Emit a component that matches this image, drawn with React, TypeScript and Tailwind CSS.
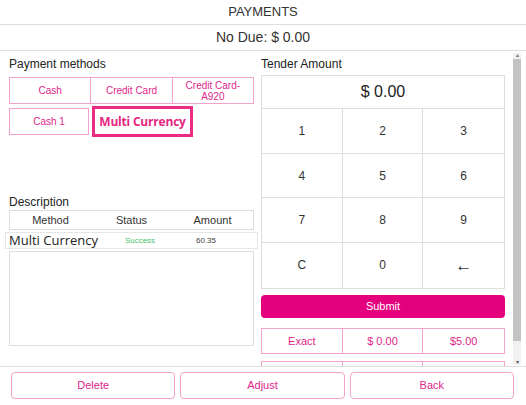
import React from "react";

const methodsRow1 = ["Cash", "Credit Card", "Credit Card-A920"];
const keys = ["1", "2", "3", "4", "5", "6", "7", "8", "9", "C", "0", "←"];
const quick = ["Exact", "$ 0.00", "$5.00"];

const App = () => {
  return (
    <div className="w-[526px] h-[405px] bg-white overflow-hidden flex flex-col text-[#333] font-['Liberation_Sans',Arial,sans-serif]">
      <div className="h-[25px] flex items-center justify-center text-[13px] border-b border-[#dedede]">
        PAYMENTS
      </div>
      <div className="h-[26px] flex items-center justify-center text-[14px] border-b border-[#dedede]">
        No Due: $ 0.00
      </div>

      <div className="h-[316px] flex border-b border-[#dedede]">
        <div className="flex-1 flex gap-[7px] pl-[9px] overflow-hidden">
          {/* left column */}
          <div className="w-[245px] flex flex-col">
            <div className="mt-[5px] text-[12px] leading-[16px] text-[#222]">Payment methods</div>
            <div className="mt-[5px] flex">
              {methodsRow1.map((m, i) => (
                <div
                  key={m}
                  className={`h-[27px] flex-1 flex items-center justify-center text-center text-[10px] leading-[11px] text-[#e0268a] border border-[#f3a3cb] ${i > 0 ? "border-l-0" : ""}`}
                >
                  {m === "Credit Card-A920" ? (
                    <span>
                      Credit Card-
                      <br />
                      A920
                    </span>
                  ) : (
                    m
                  )}
                </div>
              ))}
            </div>
            <div className="mt-[2px] flex items-center gap-[3px]">
              <div className="w-[80px] h-[27px] flex items-center justify-center text-[10px] text-[#e0268a] border border-[#f3a3cb]">
                Cash 1
              </div>
              <div className="w-[101px] h-[31px] flex items-center justify-center border-[3px] border-[#ea2c83] text-[12px] font-bold whitespace-nowrap tracking-[-0.2px] text-[#e4267f] font-['Open_Sans',sans-serif]">
                Multi Currency
              </div>
            </div>

            <div className="mt-[57px] text-[12px] leading-[16px] text-[#222]">Description</div>
            <div className="h-[20px] grid grid-cols-3 border border-[#dedede] text-[11px] text-[#333]">
              <div className="flex items-center justify-center">Method</div>
              <div className="flex items-center justify-center">Status</div>
              <div className="flex items-center justify-center">Amount</div>
            </div>
            <div className="mt-[2px] -mx-[4px] h-[17px] flex items-center border border-[#e6e6e6]">
              <div className="w-[108px] pl-[3px] text-[13px] text-[#222] font-['Open_Sans',sans-serif] leading-none whitespace-nowrap">
                Multi Currency
              </div>
              <div className="w-[52px] text-center text-[8px] text-[#3fbf6b]">Success</div>
              <div className="flex-1 pl-[30px] text-[8px] text-[#444]">60.35</div>
            </div>
            <div className="mt-[2px] h-[95px] border border-[#dedede]"></div>
          </div>

          {/* right column */}
          <div className="w-[244px] flex flex-col">
            <div className="mt-[5px] text-[12px] leading-[16px] text-[#222]">Tender Amount</div>
            <div className="mt-[3px] border border-[#dedede]">
              <div className="h-[33px] flex items-center justify-center text-[16px] text-[#222] border-b border-[#dedede]">
                $ 0.00
              </div>
              <div className="grid grid-cols-3">
                {keys.map((k, i) => (
                  <div
                    key={k}
                    className={`h-[44.7px] flex items-center justify-center text-[#333] border-[#dedede] ${k === "←" ? "text-[17px]" : "text-[12px]"} ${i % 3 !== 2 ? "border-r" : ""} ${i < 9 ? "border-b" : ""}`}
                  >
                    {k}
                  </div>
                ))}
              </div>
            </div>
            <div className="mt-[6px] h-[23px] shrink-0 rounded-[4px] bg-[#e5007e] flex items-center justify-center text-[11px] text-white">
              Submit
            </div>
            <div className="mt-[10px] h-[26px] shrink-0 grid grid-cols-3 border border-[#f3a3cb]">
              {quick.map((q, i) => (
                <div
                  key={q}
                  className={`flex items-center justify-center text-[11px] text-[#e0268a] border-[#f3a3cb] ${i < 2 ? "border-r" : ""}`}
                >
                  {q}
                </div>
              ))}
            </div>
            <div className="mt-[7px] h-[26px] shrink-0 grid grid-cols-3 border border-[#f3a3cb]">
              <div className="border-r border-[#f3a3cb]"></div>
              <div className="border-r border-[#f3a3cb]"></div>
              <div></div>
            </div>
          </div>
        </div>

        {/* scrollbar */}
        <div className="w-[8px] mr-[5px] ml-[8px] mt-[2px] mb-[1px] flex flex-col items-center bg-[#f1f1f1]">
          <div className="h-[5px] flex items-end text-[6px] leading-none text-[#777]">▴</div>
          <div className="w-full mt-[1px] h-[282px] bg-[#c3c3c3]"></div>
          <div className="flex-1"></div>
          <div className="h-[6px] text-[6px] leading-none text-[#555]">▾</div>
        </div>
      </div>

      <div className="mt-[5px] flex gap-[5px] pl-[11px] pr-[12px]">
        {["Delete", "Adjust", "Back"].map((b) => (
          <div
            key={b}
            className="flex-1 h-[27px] rounded-[4px] border-[1.5px] border-[#f3a3cb] flex items-center justify-center text-[11px] text-[#e0268a]"
          >
            {b}
          </div>
        ))}
      </div>
    </div>
  );
};

export default App;
